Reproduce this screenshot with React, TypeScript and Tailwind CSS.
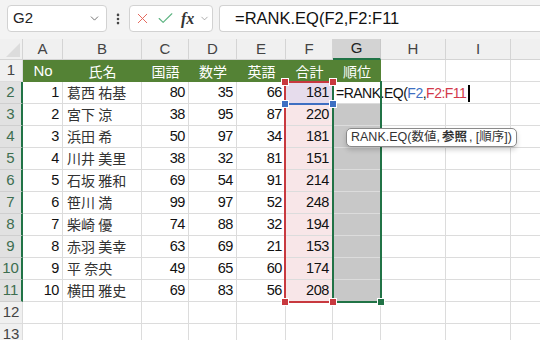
import React from 'react';
import { X, Check, ChevronDown, EllipsisVertical } from 'lucide-react';

const rows: [number, string, number, number, number, number][] = [
  [1, '葛西 祐基', 80, 35, 66, 181],
  [2, '宮下 涼', 38, 95, 87, 220],
  [3, '浜田 希', 50, 97, 34, 181],
  [4, '川井 美里', 38, 32, 81, 151],
  [5, '石坂 雅和', 69, 54, 91, 214],
  [6, '笹川 満', 99, 97, 52, 248],
  [7, '柴崎 優', 74, 88, 32, 194],
  [8, '赤羽 美幸', 63, 69, 21, 153],
  [9, '平 奈央', 49, 65, 60, 174],
  [10, '横田 雅史', 69, 83, 56, 208],
];

const cols = ['A', 'B', 'C', 'D', 'E', 'F', 'G', 'H', 'I', ''];
const heads = ['No', '氏名', '国語', '数学', '英語', '合計', '順位'];

const cell = 'border-r border-b border-[#dcdcdc] h-[22px] flex items-center overflow-hidden whitespace-nowrap';
const num = 'justify-end pr-[3px] text-[14.5px] tracking-[-0.4px]';

const Handle = ({ x, y, color }: { x: number; y: number; color: string }) => (
  <div
    className={`absolute w-[8px] h-[8px] border border-white ${color}`}
    style={{ left: x - 4, top: y - 4 }}
  />
);

const App: React.FC = () => {
  return (
    <div className="relative w-[540px] h-[340px] overflow-hidden bg-white text-[15px] text-[#111] font-['Liberation_Sans','Noto_Sans_CJK_JP',sans-serif]">
      {/* Formula bar */}
      <div className="h-[39px] bg-[#f3f3f3] flex items-start pt-[5px] pl-[7px]">
        <div className="w-[100px] h-[27px] bg-white border border-[#d2d2d2] rounded-[4px] flex items-center justify-between pl-[5px] pr-[5px]">
          <span className="text-[15px] text-[#222]">G2</span>
          <ChevronDown size={13} strokeWidth={1.5} className="text-[#555]" />
        </div>
        <div className="w-[22px] h-[27px] flex items-center justify-center text-[#444]">
          <EllipsisVertical size={14} strokeWidth={2.5} />
        </div>
        <div className="w-[84px] h-[27px] bg-white border border-[#d2d2d2] rounded-[4px] flex items-center pl-[4px] gap-[5px]">
          <X size={17} strokeWidth={1.4} className="text-[#e5685c]" />
          <Check size={19} strokeWidth={1.4} className="text-[#5cb380]" />
          <span className="font-['Liberation_Serif',serif] italic text-[16px] text-[#333] ml-[1px] font-semibold">fx</span>
          <ChevronDown size={11} strokeWidth={1.5} className="text-[#888]" />
        </div>
        <div className="ml-[6px] flex-1 h-[27px] bg-white border border-[#d2d2d2] rounded-l-[4px] border-r-0 flex items-center pl-[15px]">
          <span className="text-[16.5px] text-[#111]">=RANK.EQ(F2,F2:F11</span>
        </div>
      </div>

      {/* Grid */}
      <div className="grid grid-cols-[23px_40px_79px_47px_48px_49px_47px_48px_65px_65px_65px]">
        {/* column headers */}
        <div className="h-[21px] bg-[#f0f0f0] border-r border-b border-[#d4d4d4] relative overflow-hidden">
          <div className="absolute right-[2px] bottom-[2px] w-0 h-0 border-l-[14px] border-l-transparent border-b-[14px] border-b-[#dcdcdc]" />
        </div>
        {cols.map((c, i) => (
          <div
            key={i}
            className={`h-[21px] flex items-center justify-center border-r text-[15px] ${
              c === 'G'
                ? 'bg-[#d3d3d3] border-b-2 border-b-[#217346] border-r-[#c8c8c8] text-[#222]'
                : 'bg-[#f0f0f0] border-b border-[#d4d4d4] text-[#444]'
            }`}
          >
            {c}
          </div>
        ))}

        {/* row 1 */}
        <div className={`${cell} justify-center bg-[#f0f0f0] text-[#444] border-[#d4d4d4]`}>1</div>
        {heads.map((h, i) => (
          <div
            key={h}
            className="h-[22px] flex items-center justify-center bg-[#548235] text-white text-[14px]"
          >
            <span className={i === 0 ? 'text-[15px]' : "font-['Noto_Sans_CJK_JP',sans-serif]"}>{h}</span>
          </div>
        ))}
        <div className={cell} />
        <div className={cell} />
        <div className={cell} />

        {/* data rows */}
        {rows.map((r, i) => (
          <React.Fragment key={r[0]}>
            <div className="h-[22px] flex items-center justify-center bg-[#e1e1e1] text-[#3d6e50] border-b border-[#cfcfcf] border-r-2 border-r-[#217346]">
              {i + 2}
            </div>
            <div className={`${cell} ${num}`}>{r[0]}</div>
            <div className={`${cell} pl-[4px] text-[14px] text-[#333] font-['Noto_Sans_CJK_JP',sans-serif]`}>{r[1]}</div>
            <div className={`${cell} ${num}`}>{r[2]}</div>
            <div className={`${cell} ${num}`}>{r[3]}</div>
            <div className={`${cell} ${num}`}>{r[4]}</div>
            <div className={`${cell} ${num} ${i === 0 ? 'bg-[#e6dcec]' : 'bg-[#f8e6e8]'}`}>{r[5]}</div>
            <div className={`${cell} ${i === 0 ? 'bg-white' : 'bg-[#c8c8c8] border-[#b5b5b5]'}`} />
            <div className={cell} />
            <div className={cell} />
            <div className={cell} />
          </React.Fragment>
        ))}

        {/* empty rows */}
        {[12, 13].map((n) => (
          <React.Fragment key={n}>
            <div className={`${cell} justify-center bg-[#f0f0f0] text-[#444] border-[#d4d4d4]`}>{n}</div>
            {cols.map((c, i) => (
              <div key={i} className={cell} />
            ))}
          </React.Fragment>
        ))}
      </div>

      {/* G2 in-cell editing */}
      <div className="absolute left-[334px] top-[83px] h-[20px] w-[140px] bg-white flex items-center pl-[2px] whitespace-nowrap text-[14px] tracking-[-0.5px]">
        <span>=RANK.EQ(</span>
        <span className="text-[#3e6fc2]">F2</span>
        <span>,</span>
        <span className="text-[#d2394a]">F2:F11</span>
        <span className="inline-block w-[2px] h-[17px] bg-black ml-[2px] shrink-0" />
      </div>

      {/* reference ranges */}
      <div className="absolute left-[284px] top-[81px] w-[50px] h-[222px] border-2 border-[#c8393f]" />
      <div className="absolute left-[284px] top-[103px] w-[50px] h-[2px] bg-[#3e6fc2]" />
      <div className="absolute left-[332px] top-[81px] w-[50px] h-[222px] border-2 border-[#217346] border-t-0" />
      <Handle x={285} y={82} color="bg-[#c8393f]" />
      <Handle x={333} y={82} color="bg-[#c8393f]" />
      <Handle x={285} y={104} color="bg-[#3e6fc2]" />
      <Handle x={333} y={104} color="bg-[#3e6fc2]" />
      <Handle x={285} y={302} color="bg-[#c8393f]" />
      <Handle x={333} y={302} color="bg-[#c8393f]" />
      <Handle x={381} y={302} color="bg-[#217346]" />

      {/* function tooltip */}
      <div className="absolute left-[346px] top-[128px] h-[19px] px-[4px] flex items-center bg-white border border-[#8a8a8a] rounded-[5px] shadow-[0_3px_5px_rgba(0,0,0,0.18)] text-[12.5px] text-[#333] whitespace-nowrap">
        RANK.EQ(数値, <span className="font-bold mx-[2px]">参照</span>, [順序])
      </div>
    </div>
  );
};

export default App;
